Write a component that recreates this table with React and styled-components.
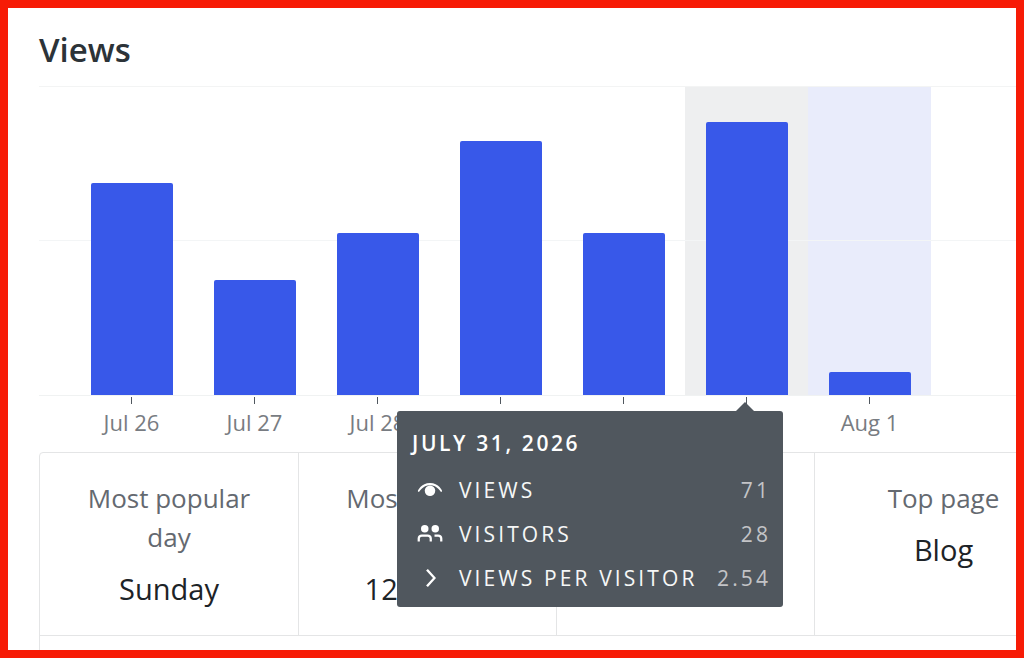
import React from "react";
import styled, { createGlobalStyle } from "styled-components";

const days = [
  { label: "Jul 26", views: 55 },
  { label: "Jul 27", views: 30 },
  { label: "Jul 28", views: 42 },
  { label: "Jul 29", views: 66 },
  { label: "Jul 30", views: 42 },
  { label: "Jul 31", views: 71, state: "hover" },
  { label: "Aug 1", views: 6, state: "current" },
];

const stats = [
  { label: "Most popular day", value: "Sunday" },
  { label: "Most popular time", value: "12:00 AM" },
  { label: "Best views ever", value: "231" },
  { label: "Top page", value: "Blog" },
];

const MAX = 80;
const PLOT_HEIGHT = 308;

const GlobalStyle = createGlobalStyle`
  body {
    margin: 0;
    font-family: "Open Sans", "Noto Sans", sans-serif;
    background: #ffffff;
  }
`;

const Frame = styled.div`
  position: relative;
  box-sizing: border-box;
  width: 1024px;
  height: 658px;
  border: 8px solid #f71b06;
  overflow: hidden;
  background: #ffffff;
`;

const Page = styled.div`
  width: 1100px;
  padding: 22px 0 0 31px;
`;

const Title = styled.h1`
  margin: 0 0 16px;
  height: 40px;
  font-size: 33px;
  line-height: 40px;
  font-weight: 600;
  color: #2c3338;
`;

const Plot = styled.div`
  position: relative;
  display: flex;
  align-items: stretch;
  height: ${PLOT_HEIGHT}px;
  padding-left: 31px;
  border-top: 1px solid #f3f4f4;
  border-bottom: 1px solid #f0f2f2;

  &::before {
    content: "";
    position: absolute;
    left: 0;
    right: 0;
    top: 153px;
    border-top: 1px solid #f3f5f6;
  }
`;

const Column = styled.div`
  width: 123px;
  display: flex;
  align-items: flex-end;
  justify-content: center;
  background: ${(p) =>
    p.$state === "hover" ? "#eeeff0" : p.$state === "current" ? "#e9ecfb" : "transparent"};
`;

const Bar = styled.div`
  position: relative;
  z-index: 1;
  width: 82px;
  border-radius: 2px 2px 0 0;
  background: #3858e9;
`;

const Axis = styled.div`
  display: flex;
  padding-left: 31px;
  margin-bottom: 15px;
`;

const Tick = styled.div`
  width: 123px;
  display: flex;
  flex-direction: column;
  align-items: center;

  &::before {
    content: "";
    width: 1px;
    height: 7px;
    margin-top: 1px;
    background: #50575e;
  }
`;

const TickLabel = styled.span`
  margin-top: 3px;
  font-size: 22px;
  line-height: 30px;
  color: #787c82;
`;

const Panel = styled.div`
  width: 1034px;
  border: 1px solid #e4e5e6;
  border-radius: 4px 4px 0 0;
`;

const StatsRow = styled.div`
  display: grid;
  grid-template-columns: repeat(4, 258px);
  border-bottom: 1px solid #e4e5e6;
`;

const Stat = styled.div`
  padding: 26px 32px;
  text-align: center;
  & + & {
    border-left: 1px solid #e4e5e6;
  }
`;

const StatLabel = styled.div`
  font-size: 26px;
  line-height: 39px;
  color: #646970;
`;

const StatValue = styled.div`
  margin-top: 12px;
  font-size: 29px;
  line-height: 40px;
  color: #1d2327;
`;

const Highlights = styled.div`
  height: 80px;
`;

const Tooltip = styled.div`
  position: absolute;
  left: 389px;
  top: 403px;
  width: 386px;
  box-sizing: border-box;
  padding: 17px 15px 7px 15px;
  border-radius: 3px;
  background: #50575e;
  color: #ffffff;

  &::before {
    content: "";
    position: absolute;
    top: -9px;
    left: 339px;
    border-left: 9px solid transparent;
    border-right: 9px solid transparent;
    border-bottom: 9px solid #50575e;
  }
`;

const TooltipDate = styled.div`
  margin-bottom: 10px;
  font-size: 21px;
  line-height: 30px;
  font-weight: 600;
  letter-spacing: 2.6px;
`;

const Row = styled.div`
  display: flex;
  align-items: center;
  height: 44px;
  font-size: 21px;
  letter-spacing: 3.1px;
`;

const Icon = styled.svg`
  flex: none;
  width: 36px;
  height: 36px;
  margin-right: 11px;
  fill: #ffffff;
`;

const RowLabel = styled.span`
  flex: 1;
  color: #f6f7f7;
`;

const RowValue = styled.span`
  margin-right: -3px;
  color: #c3c4c7;
`;

const EyeIcon = () => (
  <Icon viewBox="0 0 24 24">
    <path d="M4 13c.7.35 0 0 .67.34C4.7 13.3 7 8.75 12 8.75s7.3 4.55 7.33 4.59L20 13c.67-.34-2.3-5.75-8-5.75S3.33 12.66 4 13z" />
    <circle cx="12" cy="12.5" r="3.5" />
  </Icon>
);

const PeopleIcon = () => (
  <Icon viewBox="0 0 24 24">
    <path d="M15.5 9.5a1 1 0 100-2 1 1 0 000 2zm0 1.5a2.5 2.5 0 100-5 2.5 2.5 0 000 5zm-2.25 6v-2a2.75 2.75 0 00-2.75-2.75h-4A2.75 2.75 0 003.75 15v2h1.5v-2c0-.69.56-1.250 1.25-1.25h4c.69 0 1.25.56 1.25 1.25v2h1.5zm7-2v2h-1.5v-2c0-.69-.56-1.25-1.25-1.25H15v-1.5h2.5A2.75 2.75 0 0120.25 15zM9.5 8.5a1 1 0 11-2 0 1 1 0 012 0zm1.5 0a2.5 2.5 0 11-5 0 2.5 2.5 0 015 0z" />
  </Icon>
);

const ChevronIcon = () => (
  <Icon viewBox="0 0 24 24">
    <path d="M10.6 6L9.4 7l4.6 5-4.6 5 1.2 1 5.4-6z" />
  </Icon>
);

export default function App() {
  return (
    <Frame>
      <GlobalStyle />
      <Page>
        <Title>Views</Title>
        <Plot>
          {days.map((d) => (
            <Column key={d.label} $state={d.state}>
              <Bar style={{ height: `${(d.views / MAX) * PLOT_HEIGHT}px` }} />
            </Column>
          ))}
        </Plot>
        <Axis>
          {days.map((d) => (
            <Tick key={d.label}>
              <TickLabel>{d.label}</TickLabel>
            </Tick>
          ))}
        </Axis>
        <Panel>
          <StatsRow>
            {stats.map((s) => (
              <Stat key={s.label}>
                <StatLabel>{s.label}</StatLabel>
                <StatValue>{s.value}</StatValue>
              </Stat>
            ))}
          </StatsRow>
          <Highlights />
        </Panel>
      </Page>
      <Tooltip>
        <TooltipDate>JULY 31, 2026</TooltipDate>
        <Row>
          <EyeIcon />
          <RowLabel>VIEWS</RowLabel>
          <RowValue>71</RowValue>
        </Row>
        <Row>
          <PeopleIcon />
          <RowLabel>VISITORS</RowLabel>
          <RowValue>28</RowValue>
        </Row>
        <Row>
          <ChevronIcon />
          <RowLabel>VIEWS PER VISITOR</RowLabel>
          <RowValue>2.54</RowValue>
        </Row>
      </Tooltip>
    </Frame>
  );
}
